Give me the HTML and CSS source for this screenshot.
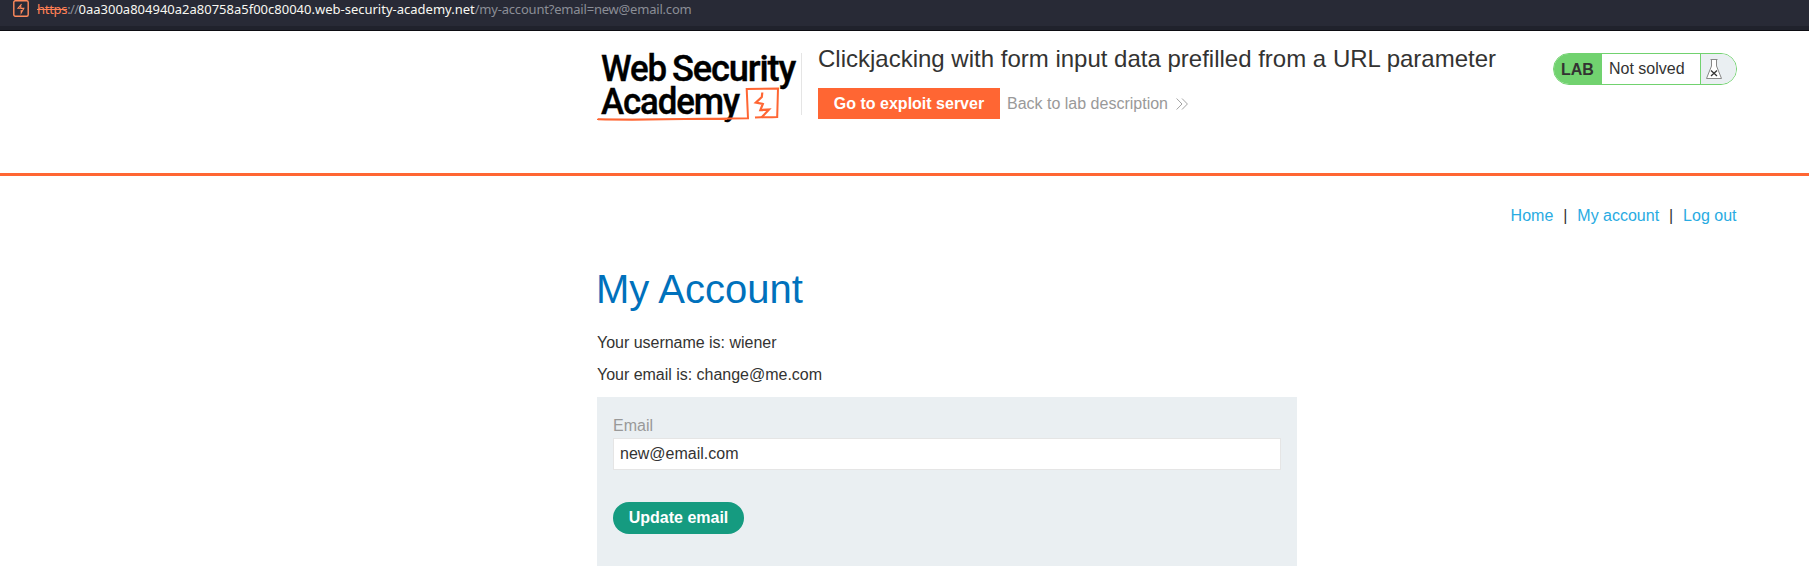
FILE: index.html
```html
<!DOCTYPE html>
<html lang="en">
<head>
<meta charset="utf-8">
<title>Clickjacking with form input data prefilled from a URL parameter</title>
<link rel="stylesheet" href="styles.css">
</head>
<body>
<div class="address-bar">
  <svg class="address-icon" width="16" height="17" viewBox="0 0 16 17" fill="none" stroke="#ff8a5c">
    <rect x=".8" y=".8" width="14.4" height="15.4" rx="1.5" stroke-width="1.4"/>
    <path d="M8.6 4 L5 8.2 H7.8 V5.5 M8 8.4 H10.8 L8.2 13 V10" stroke-width="1.1"/>
  </svg>
  <div class="url"><span class="url-scheme">https</span><span class="url-dim url-slashes">://</span><span class="url-host">0aa300a804940a2a80758a5f00c80040.web-security-academy.net</span><span class="url-dim url-path">/my-account?email=new@email.com</span></div>
</div>
<header class="lab-header">
  <div class="container header-row">
    <svg class="logo" width="204" height="70" viewBox="0 0 204 70">
      <g class="logo-text">
        <text x="4" y="28.3" textLength="65" lengthAdjust="spacingAndGlyphs">Web</text>
        <text x="75" y="28.3" textLength="123" lengthAdjust="spacingAndGlyphs">Security</text>
        <text x="4" y="61" textLength="138" lengthAdjust="spacingAndGlyphs">Academy</text>
      </g>
      <g fill="none" stroke="#ff6633">
        <path d="M1 66.3 C50 67.5 100 65.8 151 65.2 L149.7 36 L181 35.5 L180.2 64 C170 64.8 164 64 158 64.5" stroke-width="2"/>
        <path d="M0 66.3 H130" stroke-width="1.3"/>
        <path d="M165.3 39.5 L164.8 44 L158.8 49.6 L165.8 51 L163.4 57 L172 56.6 L164.5 64.5" stroke-width="2.2"/>
      </g>
      <rect class="logo-divider" x="204" y="0" width="1" height="62"/>
    </svg>
    <div class="title-block">
      <h2>Clickjacking with form input data prefilled from a URL parameter</h2>
      <div class="actions">
        <a class="exploit-button">Go to exploit server</a>
        <a class="back-link">Back to lab description
          <svg width="12" height="12" viewBox="0 0 12 12" fill="none" stroke="#999" stroke-width=".9"><path d="M.6 .5 L6 6 L.6 11.5 M6 .5 L11.4 6 L6 11.5"/></svg>
        </a>
      </div>
    </div>
    <div class="lab-status">
      <span class="lab-label">LAB</span>
      <span class="lab-state">Not solved</span>
      <span class="lab-flask">
        <svg width="18" height="22" viewBox="0 0 18 22"><path d="M5.5 1.5 H12.5 M6.5 1.5 V8 L1.5 20.5 H16.5 L11.5 8 V1.5" fill="#fff" stroke="#888" stroke-width="1"/><path d="M6 12.5 L12 18 M12 12.5 L6 18" stroke="#333" stroke-width="1.3"/></svg>
      </span>
    </div>
  </div>
</header>
<main class="container">
  <nav class="top-links"><a>Home</a><span>|</span><a>My account</a><span>|</span><a>Log out</a></nav>
  <h1>My Account</h1>
  <p>Your username is: wiener</p>
  <p>Your email is: change@me.com</p>
  <form class="email-form">
    <label for="email">Email</label>
    <input id="email" type="email" value="new@email.com">
    <button type="button">Update email</button>
  </form>
</main>
</body>
</html>
```
FILE: styles.css
```css
* { box-sizing: border-box; }
body {
  margin: 0;
  background: #fff;
  color: #333332;
  font: 16px/20px "Liberation Sans", Arial, sans-serif;
  overflow: hidden;
}
.address-bar {
  display: flex;
  height: 31px;
  padding-left: 13px;
  background: linear-gradient(#282a36 0 26px, #20222c 26px 30px, #0c0c12 30px);
}
.address-icon { flex: none; margin-right: 8px; }
.url {
  font: 13px/18px "Noto Sans", sans-serif;
  white-space: nowrap;
}
.url-scheme { color: #ff8055; letter-spacing: -.3px; text-decoration: line-through; }
.url-dim { color: #8b8e96; }
.url-slashes { letter-spacing: -.6px; }
.url-host { color: #f8f8f2; }
.url-path { letter-spacing: -.2px; }
.container { width: 1140px; margin-left: 597px; }
.lab-header { height: 145px; border-bottom: 3px solid #ff6633; }
.header-row { display: flex; padding-top: 22px; }
.logo { flex: none; overflow: visible; }
.logo-text { font: 500 37.6px Roboto, sans-serif; letter-spacing: -1.2px; stroke: #000; stroke-width: .4px; }
.logo-divider { fill: #e5e5e5; }
.title-block { margin-left: 17px; }
h2 { margin: -8px 0 0; font-size: 24px; font-weight: 400; line-height: 28px; white-space: nowrap; }
.actions { display: flex; margin-top: 15px; }
.exploit-button {
  width: 182px;
  height: 31px;
  background: #ff6633;
  color: #fff;
  font-weight: 700;
  line-height: 31px;
  text-align: center;
}
.back-link { display: flex; align-items: center; gap: 8px; margin-left: 7px; color: #999; }
.lab-status {
  display: flex;
  width: 184px;
  height: 32px;
  margin-left: auto;
  border: 1px solid #71d26f;
  border-radius: 16px;
  overflow: hidden;
  line-height: 30px;
}
.lab-label { width: 48px; padding: 1px 0 0 7px; background: #71d26f; font-weight: 700; }
.lab-state { width: 99px; padding-left: 7px; border-right: 1px solid #71d26f; }
.lab-flask { display: flex; flex: 1; align-items: center; padding-left: 4px; background: #eaeff2; }
.top-links { display: flex; justify-content: flex-end; padding: 30px .5px 0 0; line-height: 20px; }
.top-links a { color: #29abe2; }
.top-links span { width: 24px; text-align: center; }
h1 { margin: 40px 0 0 -1px; color: #0071bc; font-size: 40px; font-weight: 400; line-height: 46px; }
p { margin: 0; line-height: 20px; letter-spacing: -.02px; }
h1 + p { margin-top: 21px; }
p + p { margin-top: 12px; }
.email-form {
  display: flex;
  flex-direction: column;
  align-items: flex-start;
  width: 700px;
  height: 169px;
  margin-top: 12px;
  padding: 18px 16px;
  background: #eaeff2;
}
.email-form label { height: 23px; color: #999; line-height: 22px; }
.email-form input {
  width: 668px;
  height: 32px;
  padding: 0 6px;
  border: 1px solid #e5e5e5;
  background: #fff;
  color: #333332;
  font: inherit;
}
.email-form button {
  width: 131px;
  height: 32px;
  margin-top: 32px;
  padding: 0;
  border: 0;
  border-radius: 16px;
  background: #159b80;
  color: #fff;
  font: 700 16px/32px "Liberation Sans", Arial, sans-serif;
}
```
